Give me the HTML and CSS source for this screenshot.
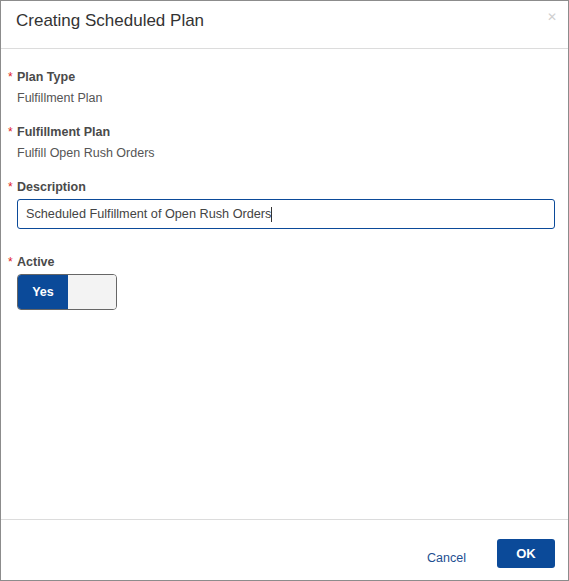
FILE: index.html
```html
<!DOCTYPE html>
<html>
<head>
<meta charset="utf-8">
<link rel="stylesheet" href="styles.css">
</head>
<body>
<div class="dialog">
  <div class="header">
    <div class="title">Creating Scheduled Plan</div>
    <div class="close">&#x2715;</div>
  </div>
  <div class="content">
    <div class="field">
      <div class="label"><span class="req">*</span>Plan Type</div>
      <div class="value">Fulfillment Plan</div>
    </div>
    <div class="field">
      <div class="label"><span class="req">*</span>Fulfillment Plan</div>
      <div class="value">Fulfill Open Rush Orders</div>
    </div>
    <div class="field field-input">
      <div class="label"><span class="req">*</span>Description</div>
      <div class="input">Scheduled Fulfillment of Open Rush Orders<span class="caret"></span></div>
    </div>
    <div class="field">
      <div class="label"><span class="req">*</span>Active</div>
      <div class="toggle">
        <div class="seg on">Yes</div>
        <div class="seg off"></div>
      </div>
    </div>
  </div>
  <div class="footer">
    <div class="cancel">Cancel</div>
    <div class="ok">OK</div>
  </div>
</div>
</body>
</html>
```
FILE: styles.css
```css
html, body {
  margin: 0;
  padding: 0;
  background: #fff;
}
.dialog {
  width: 569px;
  height: 581px;
  box-sizing: border-box;
  border: 1px solid #8c8c8c;
  display: flex;
  flex-direction: column;
  font-family: "Liberation Sans", Arial, sans-serif;
  color: #444;
}
.header {
  height: 47px;
  border-bottom: 1px solid #dcdcdc;
  display: flex;
  align-items: flex-start;
  justify-content: space-between;
  padding: 0 11px 0 15px;
}
.title {
  font-size: 17px;
  color: #333;
  line-height: 20px;
  margin-top: 10px;
}
.close {
  font-size: 12px;
  color: #cfcfcf;
  margin-top: 10px;
  line-height: 12px;
}
.content {
  flex: 1;
  padding: 20px 13px 0 16px;
}
.field {
  margin-bottom: 18px;
}
.field-input {
  margin-bottom: 25px;
}
.label {
  font-size: 12.5px;
  font-weight: bold;
  line-height: 16px;
  color: #4a4a4a;
  margin-bottom: 5px;
  position: relative;
}
.req {
  color: #e0201b;
  font-weight: normal;
  font-size: 12px;
  position: absolute;
  left: -9px;
  top: 0;
}
.value {
  font-size: 12.5px;
  line-height: 16px;
  color: #555;
}
.input {
  height: 28px;
  border: 1px solid #0b4a99;
  border-radius: 3px;
  font-size: 12.7px;
  color: #444;
  line-height: 28px;
  padding-left: 8px;
  margin-top: -1px;
  display: flex;
  align-items: center;
}
.caret {
  display: inline-block;
  width: 1px;
  height: 15px;
  background: #333;
}
.toggle {
  width: 98px;
  height: 34px;
  border: 1px solid #666;
  border-radius: 4px;
  display: flex;
  overflow: hidden;
  margin-top: -1px;
}
.seg {
  width: 50px;
  height: 100%;
  display: flex;
  align-items: center;
  justify-content: center;
  font-size: 12.5px;
  font-weight: bold;
}
.seg.on {
  background: #0b4a99;
  color: #fff;
}
.seg.off {
  background: #f3f3f3;
  flex: 1;
}
.footer {
  height: 60px;
  border-top: 1px solid #dcdcdc;
  display: flex;
  align-items: flex-start;
  justify-content: flex-end;
  padding-right: 12px;
}
.cancel {
  font-size: 12.5px;
  color: #1d4f91;
  margin-top: 31px;
  margin-right: 31px;
  line-height: 14px;
}
.ok {
  width: 58px;
  height: 29px;
  margin-top: 19px;
  margin-right: 1px;
  background: #0b4a99;
  border-radius: 3px;
  color: #fff;
  font-size: 13px;
  font-weight: bold;
  display: flex;
  align-items: center;
  justify-content: center;
}
```
